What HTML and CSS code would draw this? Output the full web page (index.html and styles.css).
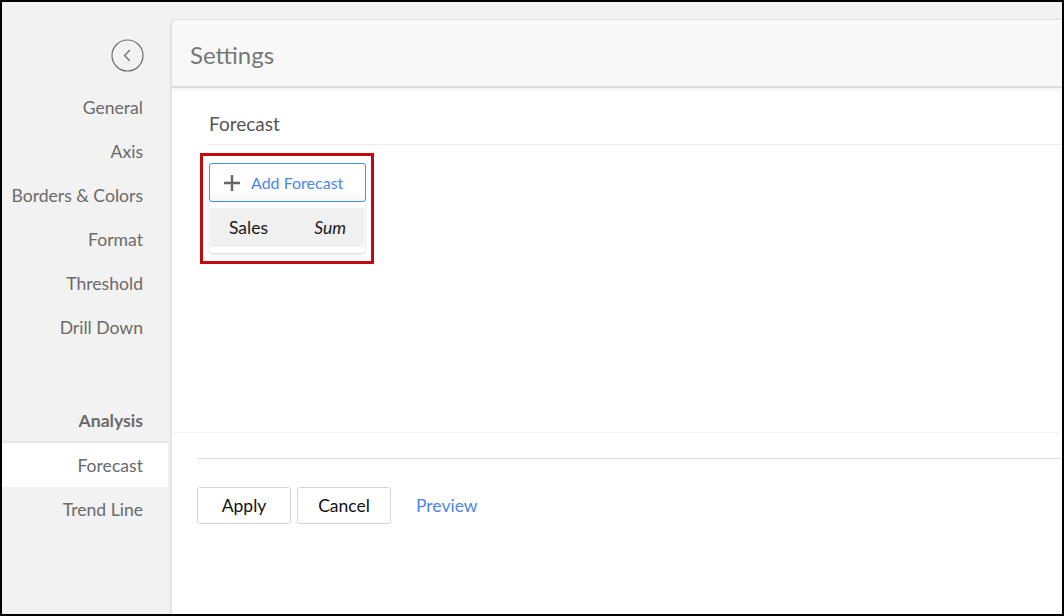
FILE: index.html
```html
<!DOCTYPE html>
<html>
<head>
<meta charset="utf-8">
<title>Settings</title>
<link rel="stylesheet" href="styles.css">
</head>
<body>
<div class="frame">
  <aside class="sidebar">
    <div class="back-row">
      <svg class="back-icon" width="33" height="33" viewBox="0 0 33 33">
        <circle cx="16.5" cy="16.5" r="15.5" fill="none" stroke="#6b6b6b" stroke-width="1.2"/>
        <path d="M18.5 11.5 L13.5 16.5 L18.5 21.5" fill="none" stroke="#6b6b6b" stroke-width="1.3" stroke-linecap="round" stroke-linejoin="round"/>
      </svg>
    </div>
    <nav class="nav">
      <div class="nav-item">General</div>
      <div class="nav-item">Axis</div>
      <div class="nav-item">Borders &amp; Colors</div>
      <div class="nav-item">Format</div>
      <div class="nav-item">Threshold</div>
      <div class="nav-item">Drill Down</div>
    </nav>
    <nav class="nav nav-analysis">
      <div class="nav-heading">Analysis</div>
      <div class="nav-item active">Forecast</div>
      <div class="nav-item">Trend Line</div>
    </nav>
  </aside>
  <main class="panel">
    <header class="panel-header">Settings</header>
    <section class="panel-body">
      <div class="section-title">Forecast</div>
      <div class="highlight">
        <div class="add-btn">
          <svg class="plus" width="18" height="18" viewBox="0 0 18 18">
            <path d="M9 1 V17 M1 9 H17" stroke="#666" stroke-width="2.4"/>
          </svg>
          <span>Add Forecast</span>
        </div>
        <div class="dropdown">
          <div class="dropdown-row">
            <span class="field">Sales</span>
            <span class="agg">Sum</span>
          </div>
        </div>
      </div>
    </section>
    <footer class="panel-footer">
      <div class="actions">
        <button class="btn">Apply</button>
        <button class="btn">Cancel</button>
        <span class="link">Preview</span>
      </div>
    </footer>
  </main>
</div>
</body>
</html>
```
FILE: styles.css
```css
* { box-sizing: border-box; }
html, body { margin: 0; padding: 0; }
body {
  font-family: Lato, "Open Sans", "Liberation Sans", sans-serif;
  background: #000;
}
.frame {
  width: 1064px;
  height: 616px;
  border: 2px solid #000;
  background: #f2f2f2;
  display: flex;
  overflow: hidden;
}
.sidebar {
  width: 169px;
  flex: none;
  background: #f2f2f2;
}
.back-row {
  height: 84px;
  display: flex;
  justify-content: flex-end;
  align-items: center;
  padding-right: 27px;
  padding-top: 22px;
}
.back-icon { display: block; }
.nav-item, .nav-heading {
  width: 166px;
  height: 44px;
  line-height: 44px;
  text-align: right;
  padding-right: 25px;
  font-size: 17.6px;
  color: #6a6a6a;
}
.nav-analysis { margin-top: 49px; }
.nav-heading {
  font-weight: 700;
  color: #6a6a6a;
  border-bottom: 2px solid #e6e6e6;
}
.nav-item.active { background: #fff; line-height: 46px; }
.nav-item.active + .nav-item { line-height: 46px; }
.panel {
  flex: 1;
  margin-top: 17px;
  background: #fff;
  border-left: 1px solid #e2e2e2;
  border-top: 1px solid #e2e2e2;
  border-top-left-radius: 6px;
  box-shadow: -1px 0 2px rgba(0,0,0,0.06);
  display: flex;
  flex-direction: column;
  min-width: 0;
}
.panel-header {
  height: 68px;
  background: #f8f8f8;
  border-top-left-radius: 6px;
  border-bottom: 2px solid #dcdcdc;
  box-shadow: 0 2px 3px rgba(0,0,0,0.05);
  padding-left: 18px;
  line-height: 70px;
  font-size: 24px;
  color: #777;
}
.panel-body {
  height: 345px;
  border-bottom: 1px solid #f5f5f5;
}
.section-title {
  margin-left: 37px;
  padding-top: 23px;
  line-height: 26px;
  padding-bottom: 7px;
  border-bottom: 1px solid #ececec;
  font-size: 19px;
  color: #555;
}
.highlight {
  margin: 8px 0 0 28px;
  width: 174px;
  border: 3px solid #c4080f;
  padding: 7px 5px 8px 6px;
}
.add-btn {
  width: 157px;
  height: 39px;
  display: flex;
  align-items: center;
  gap: 10px;
  padding: 0 0 0 13px;
  border: 1px solid #4d90e6;
  border-radius: 3px;
  background: linear-gradient(#fff 70%, #f6f6f6);
  font-size: 16px;
  color: #4a86e8;
  cursor: pointer;
}
.plus { display: block; flex: none; }
.dropdown {
  width: 156px;
  background: #fff;
  border-radius: 0 0 4px 4px;
  box-shadow: 0 1px 3px rgba(0,0,0,0.18);
  padding: 6px 1px 6px 1px;
}
.dropdown-row {
  height: 39px;
  background: #f0f0f0;
  display: flex;
  justify-content: space-between;
  align-items: center;
  padding: 0 18px 0 19px;
  font-size: 17.5px;
  color: #1a1a1a;
}
.agg { font-style: italic; }
.panel-footer {
  padding: 25px 0 0 25px;
}
.actions {
  border-top: 1px solid #dcdcdc;
  padding-top: 28px;
  display: flex;
  align-items: center;
  gap: 6px;
}
.btn {
  width: 94px;
  height: 37px;
  border: 1px solid #d6d6d6;
  border-radius: 3px;
  background: #fff;
  font-family: inherit;
  font-size: 17.5px;
  color: #111;
  cursor: pointer;
}
.link {
  margin-left: 19px;
  font-size: 17.5px;
  color: #4a86e8;
}
```
